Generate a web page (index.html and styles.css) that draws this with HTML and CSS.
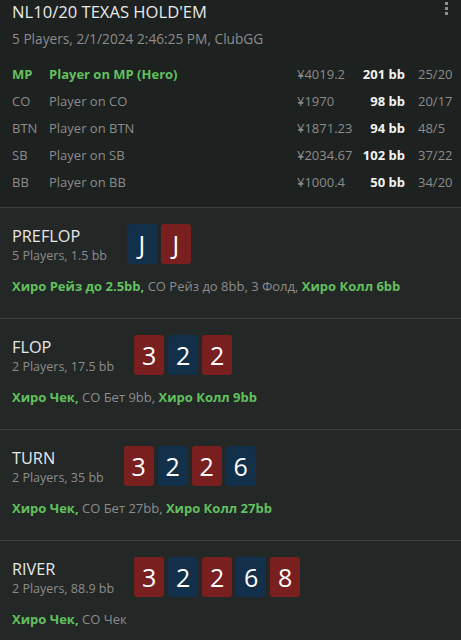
FILE: index.html
```html
<!DOCTYPE html>
<html lang="ru">
<head>
    <meta charset="UTF-8">
    <meta name="viewport" content="width=device-width, initial-scale=1.0">
    <title>NL10/20 Texas Hold'em</title>
    <link rel="stylesheet" href="styles.css">
</head>
<body>

<header class="hand-header">
    <h1 class="hand-title">NL10/20 TEXAS HOLD'EM</h1>
    <button class="menu-btn" aria-label="Меню">
        <span></span><span></span><span></span>
    </button>
    <p class="hand-info">5 Players, 2/1/2024 2:46:25 PM, ClubGG</p>

    <!-- Игроки за столом -->
    <div class="players">
        <div class="player hero">
            <span class="pos">MP</span>
            <span class="name">Player on MP (Hero)</span>
            <span class="stack">¥4019.2</span>
            <span class="bb">201 bb</span>
            <span class="ratio">25/20</span>
        </div>
        <div class="player">
            <span class="pos">CO</span>
            <span class="name">Player on CO</span>
            <span class="stack">¥1970</span>
            <span class="bb">98 bb</span>
            <span class="ratio">20/17</span>
        </div>
        <div class="player">
            <span class="pos">BTN</span>
            <span class="name">Player on BTN</span>
            <span class="stack">¥1871.23</span>
            <span class="bb">94 bb</span>
            <span class="ratio">48/5</span>
        </div>
        <div class="player">
            <span class="pos">SB</span>
            <span class="name">Player on SB</span>
            <span class="stack">¥2034.67</span>
            <span class="bb">102 bb</span>
            <span class="ratio">37/22</span>
        </div>
        <div class="player">
            <span class="pos">BB</span>
            <span class="name">Player on BB</span>
            <span class="stack">¥1000.4</span>
            <span class="bb">50 bb</span>
            <span class="ratio">34/20</span>
        </div>
    </div>
</header>

<section class="street">
    <div class="street-top">
        <div class="street-name">
            <h2>PREFLOP</h2>
            <p>5 Players, 1.5 bb</p>
        </div>
        <div class="cards">
            <span class="card blue">J</span>
            <span class="card red">J</span>
        </div>
    </div>
    <p class="actions"><b>Хиро Рейз до 2.5bb,</b> CO Рейз до 8bb, 3 Фолд, <b>Хиро Колл 6bb</b></p>
</section>

<section class="street">
    <div class="street-top">
        <div class="street-name">
            <h2>FLOP</h2>
            <p>2 Players, 17.5 bb</p>
        </div>
        <div class="cards">
            <span class="card red">3</span>
            <span class="card blue">2</span>
            <span class="card red">2</span>
        </div>
    </div>
    <p class="actions"><b>Хиро Чек,</b> CO Бет 9bb, <b>Хиро Колл 9bb</b></p>
</section>

<section class="street">
    <div class="street-top">
        <div class="street-name">
            <h2>TURN</h2>
            <p>2 Players, 35 bb</p>
        </div>
        <div class="cards">
            <span class="card red">3</span>
            <span class="card blue">2</span>
            <span class="card red">2</span>
            <span class="card blue">6</span>
        </div>
    </div>
    <p class="actions"><b>Хиро Чек,</b> CO Бет 27bb, <b>Хиро Колл 27bb</b></p>
</section>

<section class="street">
    <div class="street-top">
        <div class="street-name">
            <h2>RIVER</h2>
            <p>2 Players, 88.9 bb</p>
        </div>
        <div class="cards">
            <span class="card red">3</span>
            <span class="card blue">2</span>
            <span class="card red">2</span>
            <span class="card blue">6</span>
            <span class="card red">8</span>
        </div>
    </div>
    <p class="actions"><b>Хиро Чек,</b> CO Чек</p>
</section>

</body>
</html>
```

FILE: styles.css
```css
body {
    font-family: 'Open Sans', 'Noto Sans', sans-serif;
    background-color: #232726;
    color: #8c8c8c;
    margin: 0;
    padding: 0;
}

h1, h2, p {
    margin: 0;
}

.hand-header {
    position: relative;
    background-color: #1d211f;
    padding: 0 0 12px 12px;
    border-bottom: 1px solid #3b403e;
}

.hand-title {
    font-size: 16.6px;
    font-weight: normal;
    line-height: 24px;
    color: #e8e8e8;
}

.menu-btn {
    position: absolute;
    top: 2px;
    right: 13px;
    display: flex;
    flex-direction: column;
    gap: 2px;
    background: none;
    border: none;
    padding: 0;
    cursor: pointer;
}

.menu-btn span {
    width: 3px;
    height: 3px;
    background-color: #8f8f8f;
}

.hand-info {
    margin-top: 5px;
    font-size: 13.7px;
    line-height: 20px;
}

.players {
    margin-top: 11px;
}

.player {
    display: grid;
    grid-template-columns: 37px 1fr 58px 50px 56px;
    height: 27px;
    align-items: center;
    font-size: 13px;
}

.player .bb {
    text-align: right;
    font-weight: bold;
    color: #f2f2f2;
}

.player .ratio {
    padding-left: 13px;
}

.player.hero .pos,
.player.hero .name {
    color: #62c05e;
    font-weight: bold;
}

.street {
    padding: 16px 12px 23px;
    border-bottom: 1px solid #3b403e;
}

.street-top {
    display: flex;
    align-items: center;
    gap: 20px;
}

.street-name h2 {
    font-size: 16.3px;
    font-weight: normal;
    line-height: 24px;
    color: #e8e8e8;
}

.street-name p {
    font-size: 12.5px;
    line-height: 16px;
}

.cards {
    display: flex;
    gap: 4px;
}

.card {
    width: 30px;
    height: 40px;
    border-radius: 3px;
    display: flex;
    align-items: center;
    justify-content: center;
    color: #fff;
    font-size: 25px;
}

.card.red {
    background-color: #7a1f1f;
}

.card.blue {
    background-color: #13304b;
}

.actions {
    margin-top: 13px;
    font-size: 13px;
    line-height: 18px;
}

.actions b {
    color: #62c05e;
}
```
